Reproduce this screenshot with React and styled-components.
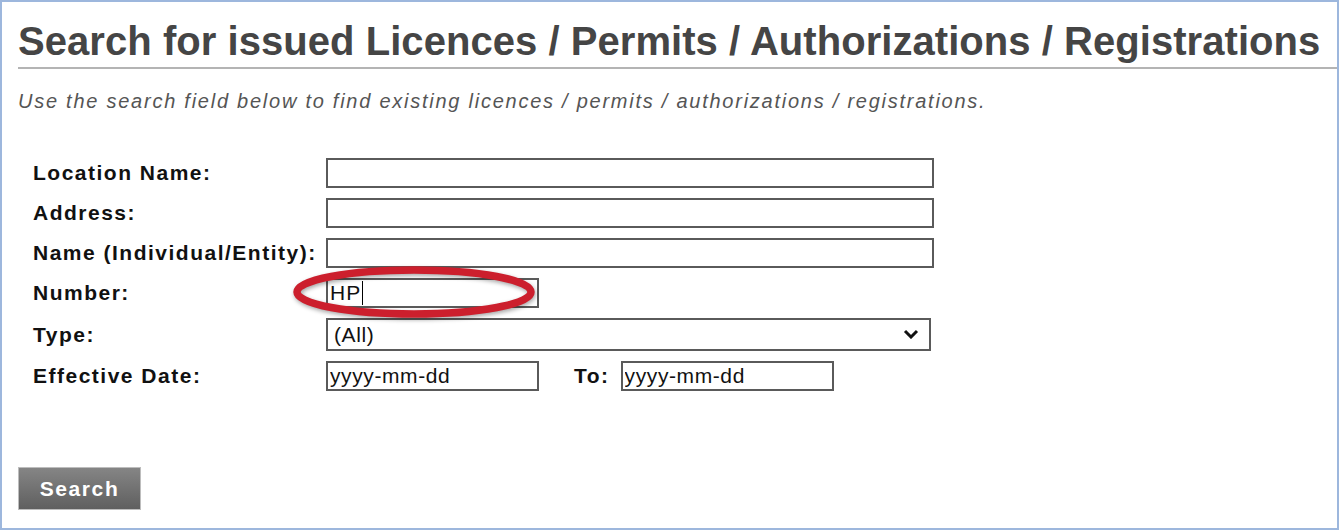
import React from "react";
import styled, { createGlobalStyle } from "styled-components";

const GlobalStyle = createGlobalStyle`
  html, body {
    margin: 0;
    padding: 0;
    background: #ffffff;
    font-family: "Liberation Sans", Arial, sans-serif;
  }
`;

const Frame = styled.div`
  box-sizing: border-box;
  width: 1339px;
  height: 530px;
  border: 2px solid #9db7dd;
  padding: 18px 0 0 16px;
  position: relative;
`;

const Title = styled.h1`
  margin: 0;
  font-size: 40px;
  line-height: 42px;
  letter-spacing: 0.05px;
  font-weight: bold;
  color: #454545;
  white-space: nowrap;
`;

const Rule = styled.div`
  height: 2px;
  background: #b4b4b4;
  margin-top: 5px;
`;

const Intro = styled.p`
  margin: 20px 0 0;
  font-size: 20px;
  line-height: 24px;
  letter-spacing: 1.75px;
  font-style: italic;
  color: #555555;
`;

const Form = styled.div`
  display: grid;
  grid-template-columns: 293px 1fr;
  grid-template-rows: 30px 30px 30px 30px 33px 30px;
  row-gap: 10px;
  align-items: center;
  margin: 45px 0 0 15px;
  position: relative;
`;

const Label = styled.label`
  font-size: 21px;
  letter-spacing: 1.5px;
  font-weight: bold;
  color: #111111;
  white-space: nowrap;
`;

const fieldText = `
  font-family: "Liberation Sans", Arial, sans-serif;
  font-size: 21px;
  letter-spacing: 0.6px;
  color: #111111;
`;

const TextBox = styled.input`
  box-sizing: border-box;
  width: ${(p) => p.$w}px;
  height: 30px;
  border: 2px solid #5a5a5a;
  padding: 0 2px;
  ${fieldText}
  background: #fff;
  outline: none;
`;

const FakeBox = styled.div`
  box-sizing: border-box;
  width: 213px;
  height: 30px;
  border: 2px solid #5a5a5a;
  padding: 0 2px;
  display: flex;
  align-items: center;
  ${fieldText}
  letter-spacing: 1.2px;
`;

const Caret = styled.span`
  display: inline-block;
  width: 1.5px;
  height: 24px;
  background: #000;
`;

const SelectWrap = styled.div`
  position: relative;
  width: 605px;
  height: 33px;
`;

const Select = styled.select`
  appearance: none;
  box-sizing: border-box;
  width: 100%;
  height: 100%;
  border: 2px solid #5a5a5a;
  border-radius: 0;
  padding: 0 6px;
  ${fieldText}
  background: #fff;
  outline: none;
`;

const Chevron = styled.svg`
  position: absolute;
  right: 12px;
  top: 11px;
  pointer-events: none;
`;

const DateRow = styled.div`
  display: flex;
  align-items: center;
`;

const ToLabel = styled(Label)`
  margin: 0 11px 0 35px;
`;

const Ring = styled.svg`
  position: absolute;
  left: 261px;
  top: 110px;
  pointer-events: none;
  overflow: visible;
  filter: drop-shadow(1px 2px 2px rgba(0, 0, 0, 0.35));
`;

const SearchButton = styled.button`
  margin-top: 76px;
  width: 123px;
  height: 43px;
  border: 1px solid #bdbdbd;
  background: linear-gradient(#858585, #5f5f5f);
  color: #ffffff;
  font-family: "Liberation Sans", Arial, sans-serif;
  font-size: 21px;
  letter-spacing: 1.6px;
  font-weight: bold;
  padding: 0;
  cursor: pointer;
`;

const App = () => {
  return (
    <>
      <GlobalStyle />
      <Frame>
        <Title>Search for issued Licences / Permits / Authorizations / Registrations</Title>
        <Rule />
        <Intro>
          Use the search field below to find existing licences / permits / authorizations / registrations.
        </Intro>
        <Form>
          <Label>Location Name:</Label>
          <TextBox $w={608} defaultValue="" />
          <Label>Address:</Label>
          <TextBox $w={608} defaultValue="" />
          <Label>Name (Individual/Entity):</Label>
          <TextBox $w={608} defaultValue="" />
          <Label>Number:</Label>
          <FakeBox>
            HP
            <Caret />
          </FakeBox>
          <Label>Type:</Label>
          <SelectWrap>
            <Select defaultValue="all">
              <option value="all">(All)</option>
            </Select>
            <Chevron width="16" height="10" viewBox="0 0 16 10">
              <path d="M2 2 L8 8 L14 2" fill="none" stroke="#111" strokeWidth="3" />
            </Chevron>
          </SelectWrap>
          <Label>Effective Date:</Label>
          <DateRow>
            <TextBox $w={213} defaultValue="yyyy-mm-dd" />
            <ToLabel>To:</ToLabel>
            <TextBox $w={213} defaultValue="yyyy-mm-dd" />
          </DateRow>
          <Ring width="240" height="48" viewBox="0 0 240 48">
            <ellipse cx="120" cy="24" rx="117" ry="22" fill="none" stroke="#cc1f2d" strokeWidth="7.5" />
          </Ring>
        </Form>
        <SearchButton>Search</SearchButton>
      </Frame>
    </>
  );
};

export default App;
